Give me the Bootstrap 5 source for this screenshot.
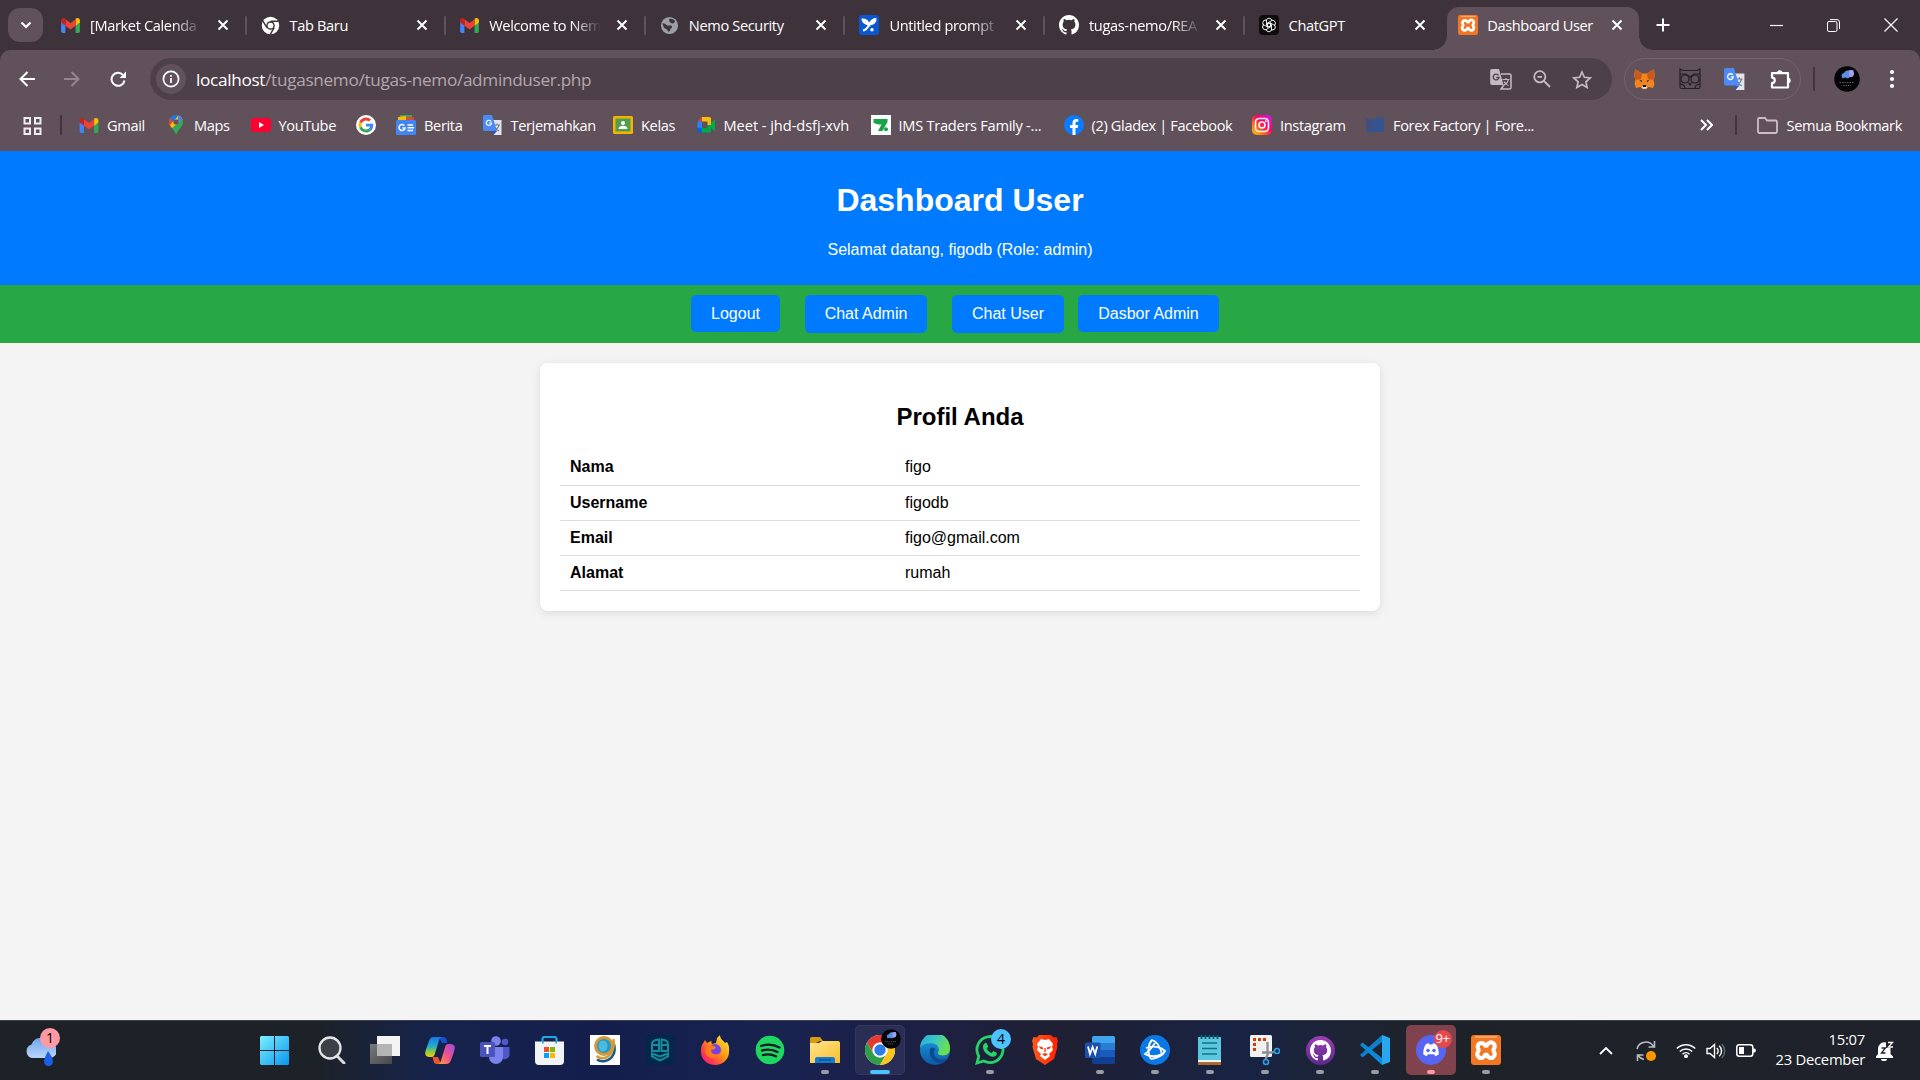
<!DOCTYPE html>
<html lang="id">
<head>
<meta charset="utf-8">
<title>Dashboard User</title>
<link href="https://cdn.jsdelivr.net/npm/bootstrap@5.3.0/dist/css/bootstrap.min.css" rel="stylesheet">
<style>
html,body{height:100%}
body{width:1920px;height:1080px;overflow:hidden;background:#f4f4f4;font-family:"Liberation Sans",Arial,sans-serif;color:#000;line-height:normal}
svg{display:block;flex:none}
.chrome-ui,.taskbar{font-family:"Open Sans","Noto Sans",sans-serif;color:#fff}
.tabstrip{height:50px;background:#3e333a}
.tabs-menu{width:35px;height:34px;margin:8px 3px 0 8px;border-radius:12px;background:#61515b}
.tab-item{width:199.6px;height:50px;padding:0 17px 0 15px;position:relative}
.tab-item+.tab-item:not(.is-active)::before{content:"";position:absolute;left:-1px;top:16px;width:2px;height:19px;background:#61515b;border-radius:1px}
.tab-label{width:112px;margin-left:10px;font-size:14.6px;letter-spacing:-.36px;white-space:nowrap;line-height:20px}
.tab-label.fades{-webkit-mask-image:linear-gradient(90deg,#000 75%,transparent);mask-image:linear-gradient(90deg,#000 75%,transparent)}
.tab-item.is-active{width:192px;margin:7px 0 0 4px;height:43px;padding:0 0 7px 11px;background:#61515b;border-radius:12px 12px 0 0}
.tab-item.is-active .tab-label{margin-left:9px}
.tab-item.is-active::before,.tab-item.is-active::after{content:"";position:absolute;bottom:0;width:14px;height:14px}
.tab-item.is-active::before{left:-14px;background:radial-gradient(circle at 0 0,transparent 13.5px,#61515b 14px)}
.tab-item.is-active::after{right:-14px;background:radial-gradient(circle at 100% 0,transparent 13.5px,#61515b 14px)}
.new-tab{padding-left:17px}
.win-btn{width:57px}
.win-group{margin-right:1px}
.toolwrap{background:#3e333a}
.toolbar{height:58px;background:#61515b;border-radius:10px 10px 0 0}
.nav-ico{width:45px}
.omnibox{width:1462px;height:42px;border-radius:21px;background:#4d4049;padding:0 20px 0 6px;margin-left:3px}
.info-dot{width:30px;height:30px;border-radius:50%;background:#61515b}
.url-text{font-size:17.2px;letter-spacing:-.32px;color:#b3a8ae;margin-left:10px}
.url-text b{font-weight:400;color:#fff}
.ext-pill{width:177px;height:42px;border-radius:21px;border:1px solid #75656f;margin-left:12px;padding:0 9px 0 5px}
.v-sep{width:2px;height:24px;background:#42363d;border-radius:1px}
.bookmarks{height:43px;padding:0 0 9px 23px;background:#61515b;font-size:14.6px;letter-spacing:-.36px;line-height:20px}
.bookmarks>svg:first-child{margin-top:2px}
.bm{white-space:nowrap;flex:none}
.bm span{margin-left:8px}
.bm:nth-child(3){width:87px}.bm:nth-child(4){width:84.5px}.bm:nth-child(5){width:105.5px}.bm:nth-child(6){width:40px}
.bm:nth-child(7){width:86.500px}.bm:nth-child(8){width:130.500px}.bm:nth-child(9){width:82.500px}.bm:nth-child(10){width:175px}
.bm:nth-child(11){width:193px}.bm:nth-child(12){width:188.500px}.bm:nth-child(13){width:113px}.bm:nth-child(14){width:170px}
.bm:nth-child(10){letter-spacing:-.04px}.bm:nth-child(11){letter-spacing:-.26px}
.page-head{height:134px;padding:10px;background:#007bff;color:#fff}
.page-head h1{font-size:32px;font-weight:700;line-height:37px;margin:21.4px 0}
.page-head p{font-size:16px;line-height:18px;margin:0}
.page-nav{height:58px;padding-top:10px;background:#28a745;padding-right:10px}
.page-nav .btn{font-size:16px;line-height:18px;padding:10px 0 9px;border:0;border-radius:5px;background:#007bff;color:#fff;height:37px}
.page-nav .btn.tall{height:38px}
.profile{width:840px;height:248px;margin:20px auto 0;padding:20px;border:0;border-radius:8px;background:#fff;box-shadow:0 2px 10px rgba(0,0,0,.1)}
.profile h2{font-size:24px;font-weight:700;line-height:27px;margin:20px 0;color:#000}
.profile table{margin:0;--bs-table-bg:transparent;--bs-table-color:#000;color:#000}
.profile th,.profile td{padding:8px 10px;line-height:18px;border-bottom:1px solid #ddd;height:35px;font-size:16px}
.profile th{width:335px}
.taskbar{height:60px;border-top:1px solid #39424a;background:linear-gradient(90deg,#1d2228 0,#1d2229 320px,#16234b 430px,#141e4d 600px,#182350 780px,#1c2048 880px,#1f2033 1060px,#182344 1240px,#1d2437 1330px,#1d2229 1420px,#1f222a 100%)}
.weather{width:247px;padding:2px 0 0 25px}
.task{width:55.05px;height:59px;flex:none}
.task-face{width:50px;height:50px;margin-top:4px;border-radius:5px;position:relative}
.task-face.open::after{content:"";position:absolute;left:21px;bottom:1px;width:8px;height:4px;border-radius:2px;background:#9a9ca5}
.task-face.current{background:#2a2e56;border:1px solid #34385f}
.task-face.current::after{left:14px;bottom:0;width:20px;background:#4cc2ff}
.task-face.alerting{background:#80434d}
.task-face.alerting::after{background:#ff99a4}
.pip{position:absolute;right:4px;top:4px;width:20px;height:20px;border-radius:50%;background:#4cc2ff;color:#000;font-size:14px;line-height:20px;text-align:center}
.pip-red{background:#e5484d;color:#fff;width:18px;height:18px;line-height:17px;font-size:13px;letter-spacing:-.5px;right:4px;top:5px}
.pip-pink{background:#ff99a4;right:-4px;top:-3px}
.clock{font-size:14.8px;letter-spacing:-.25px;line-height:20px;width:102px;margin:-3px 0 0 7px}
</style>
<script src="https://cdn.jsdelivr.net/npm/bootstrap@5.3.0/dist/js/bootstrap.bundle.min.js"></script>
</head>
<body class="d-flex flex-column">
<svg width="0" height="0" class="position-absolute">
<defs>
<linearGradient id="gWin" x1="0" y1="0" x2="1" y2="1"><stop offset="0" stop-color="#7af0ff"/><stop offset="1" stop-color="#0a95f0"/></linearGradient>
<linearGradient id="gInsta" x1="0" y1="1" x2="1" y2="0"><stop offset="0" stop-color="#ffd600"/><stop offset=".35" stop-color="#ff5a1f"/><stop offset=".6" stop-color="#ff0069"/><stop offset="1" stop-color="#c81fff"/></linearGradient>
<linearGradient id="gCloud" x1="0" y1="0" x2="0" y2="1"><stop offset="0" stop-color="#6fa4ef"/><stop offset="1" stop-color="#b9d6fb"/></linearGradient>
<linearGradient id="gFire" x1="1" y1="0" x2="0" y2="1"><stop offset="0" stop-color="#fff44f"/><stop offset=".45" stop-color="#ff980e"/><stop offset=".75" stop-color="#ff3750"/><stop offset="1" stop-color="#e31587"/></linearGradient>
<linearGradient id="gFold" x1="0" y1="0" x2="1" y2="1"><stop offset="0" stop-color="#ffe58a"/><stop offset="1" stop-color="#f9bd2e"/></linearGradient>
<linearGradient id="gEdge" x1="0" y1="0" x2="1" y2=".4"><stop offset="0" stop-color="#2aa7e0"/><stop offset=".5" stop-color="#36c6c8"/><stop offset="1" stop-color="#6be04e"/></linearGradient>
<linearGradient id="gEdge2" x1="0" y1="0" x2="0" y2="1"><stop offset="0" stop-color="#1b9de2"/><stop offset="1" stop-color="#0c59a4"/></linearGradient>
<linearGradient id="gCoA" x1="0" y1="0" x2="0" y2="1"><stop offset="0" stop-color="#1877e8"/><stop offset=".45" stop-color="#22a9d0"/><stop offset=".75" stop-color="#8fcf3a"/><stop offset="1" stop-color="#ffc400"/></linearGradient>
<linearGradient id="gCoB" x1="1" y1="0" x2="0" y2="1"><stop offset="0" stop-color="#9a4bea"/><stop offset=".5" stop-color="#f0508d"/><stop offset="1" stop-color="#ff9d3c"/></linearGradient>
<linearGradient id="gBrave" x1="0" y1="0" x2="1" y2="0"><stop offset="0" stop-color="#ff5a1f"/><stop offset="1" stop-color="#ff2000"/></linearGradient>
<linearGradient id="gGh" x1="0" y1="0" x2="0" y2="1"><stop offset="0" stop-color="#9b3fb5"/><stop offset="1" stop-color="#5a2a8a"/></linearGradient>
<linearGradient id="gStack" x1="0" y1="0" x2="1" y2="1"><stop offset="0" stop-color="#77797b"/><stop offset="1" stop-color="#46484a"/></linearGradient>
</defs>
<symbol id="i-gmail" viewBox="0 0 20 16"><path fill="#4285f4" d="M0 3v11.500A1.500 1.500 0 0 0 1.500 16H4.600V6.500z"/><path fill="#34a853" d="M15.400 16h3.100A1.500 1.500 0 0 0 20 14.500V3l-4.600 3.500z"/><path fill="#fbbc04" d="M15.400 1.500v6.700L20 4.700V2.600C20 .3 17.400-.8 15.600.6z"/><path fill="#ea4335" d="M4.600 8.200V1.300L10 5.400l5.400-4.100v6.900L10 12.300z"/><path fill="#c5221f" d="M0 2.600v2.100l4.600 3.500V1.300L4.200.6C2.600-.8 0 .3 0 2.600z"/></symbol>
<symbol id="i-x" viewBox="0 0 12 12"><path d="M1.500 1.500l9 9m0-9l-9 9" stroke="#fff" stroke-width="1.900"/></symbol>
<symbol id="i-chromew" viewBox="0 0 20 20"><circle cx="10" cy="10" r="9.200" fill="#fff"/><circle cx="10" cy="10" r="4.500" fill="#3e333a"/><circle cx="10" cy="10" r="3" fill="#fff"/><path d="M10 5.500h8.500M6.100 12.300L1.900 5M13.900 12.300L9.600 19.600" stroke="#3e333a" stroke-width="1.500"/></symbol>
<symbol id="i-globe" viewBox="0 0 20 20"><circle cx="10" cy="10" r="9" fill="#9aa0a6"/><path d="M2.500 7.500c3 0 3.500 1 5 2.500h4.500c1.500 1.500.5 3-1 3.500 0 2-1 3-2.500 3-.5-3-3.500-3-4.500-4.500zM9.500 3c1 1.500-.5 2.500 1 3.500s2.500 2 4.500.5c1-.8 1-2-.5-3s-3-1.500-5-1z" fill="#3e333a"/></symbol>
<symbol id="i-prompt" viewBox="0 0 20 20"><rect width="20" height="20" rx="3" fill="#0b57d0"/><path d="M4 15.500C7 15 9 12 10 10c1.500-3.500 3-6 6.500-6 .5 3-2 5-5 5.500M10 10C8 9 4 8 3.500 4.500 7 4 9 6.500 10 10z" stroke="#fff" stroke-width="1.900" fill="#fff"/><circle cx="13" cy="14.800" r="1.700" fill="#fff"/></symbol>
<symbol id="i-github" viewBox="0 0 16 16"><path d="M8 0C3.580 0 0 3.580 0 8c0 3.540 2.290 6.530 5.470 7.590.4.070.55-.17.55-.38 0-.19-.01-.82-.01-1.490-2.010.37-2.530-.49-2.690-.94-.09-.23-.48-.94-.82-1.130-.28-.15-.68-.52-.01-.53.630-.01 1.080.58 1.230.82.720 1.210 1.870.87 2.330.66.070-.52.280-.87.510-1.070-1.780-.2-3.640-.89-3.640-3.950 0-.87.310-1.590.82-2.150-.08-.2-.36-1.020.080-2.120 0 0 .67-.21 2.200.82a7.600 7.600 0 0 1 4 0c1.530-1.040 2.200-.82 2.200-.82.440 1.100.160 1.920.080 2.120.51.560.82 1.270.82 2.150 0 3.070-1.870 3.750-3.650 3.950.290.250.540.730.540 1.480 0 1.070-.01 1.930-.01 2.200 0 .21.150.46.550.38A8.010 8.010 0 0 0 16 8c0-4.420-3.580-8-8-8z"/></symbol>
<symbol id="i-gpt" viewBox="0 0 20 20"><rect width="20" height="20" rx="4" fill="#0d0d0d"/><g fill="none" stroke="#fff" stroke-width=".9"><path id="petal" d="M10 3.200a3.200 3.200 0 0 1 3 2.200l-4.500 2.600v4.300M7.200 5.500A3.200 3.200 0 0 1 10 3.200"/><use href="#petal" transform="rotate(60 10 10)"/><use href="#petal" transform="rotate(120 10 10)"/><use href="#petal" transform="rotate(180 10 10)"/><use href="#petal" transform="rotate(240 10 10)"/><use href="#petal" transform="rotate(300 10 10)"/></g></symbol>
<symbol id="i-xampp" viewBox="0 0 30 30"><rect width="30" height="30" rx="3" fill="#f37623"/><path d="M4 2h22" stroke="#ffb27a" stroke-width="1.500"/><path d="M10.500 8a3.900 3.900 0 0 0-3.200 6c.5.800.5 1.600 0 2.400a3.900 3.900 0 1 0 6.500 4c.5-1 1.900-1 2.400 0a3.900 3.900 0 1 0 6.500-4c-.5-.8-.5-1.600 0-2.400a3.900 3.900 0 1 0-6.500-4c-.5 1-1.900 1-2.400 0A3.900 3.900 0 0 0 10.500 8z" fill="none" stroke="#fff" stroke-width="4.200"/></symbol>
<symbol id="i-g" viewBox="0 0 48 48"><circle cx="24" cy="24" r="24" fill="#fff"/><g transform="translate(6 6) scale(.75)"><path fill="#ea4335" d="M24 9.500c3.540 0 6.710 1.220 9.210 3.600l6.850-6.850C35.900 2.380 30.470 0 24 0 14.620 0 6.510 5.380 2.560 13.220l7.980 6.190C12.430 13.720 17.740 9.500 24 9.500z"/><path fill="#4285f4" d="M46.980 24.550c0-1.570-.15-3.090-.38-4.550H24v9.020h12.940c-.58 2.960-2.260 5.480-4.780 7.180l7.730 6c4.510-4.180 7.090-10.360 7.090-17.650z"/><path fill="#fbbc05" d="M10.530 28.590a14.500 14.500 0 0 1 0-9.180l-7.980-6.190a24 24 0 0 0 0 21.560z"/><path fill="#34a853" d="M24 48c6.480 0 11.930-2.130 15.890-5.810l-7.730-6c-2.150 1.450-4.920 2.300-8.160 2.300-6.260 0-11.570-4.220-13.470-9.910l-7.980 6.190C6.510 42.620 14.620 48 24 48z"/></g></symbol>
<symbol id="i-trans" viewBox="0 0 20 20"><path d="M9 5h9.500v15H11z" fill="#e4e4e8"/><path d="M11 10h6m-3-1.500V10m2 0c-.5 2.500-2 4-4 5m0-3c1 2 2.500 3.500 4 4" stroke="#6b7f88" fill="none" stroke-width="1.100"/><path d="M1.500 0H9l5 16H1.500A1.500 1.500 0 0 1 0 14.500v-13A1.500 1.500 0 0 1 1.500 0z" fill="#4c8bf5"/><path d="M9.500 16H14l-3.500 4z" fill="#2a56c6"/><path d="M8 6.300A2.600 2.600 0 1 0 8.500 8H6.200" stroke="#fff" stroke-width="1.200" fill="none"/></symbol>
<symbol id="i-avatar" viewBox="0 0 26 26"><circle cx="13" cy="13" r="12.800" fill="#050507"/><path d="M7.500 9.500c0-2 2-2 3-3 1-2 3-2 4.500-2.200L19 4l1 3.500-1 3-3 .5-2 1.500-3-1-2.500 1z" fill="#5a8fe8"/><path d="M15 4.500l4-.5 1 3.500-1 3-3.500.5z" fill="#a8a0e8"/><path d="M5.500 16.500h15M9 19.500h8" stroke="#5d6166" stroke-width="1.200" stroke-dasharray="1.500 1"/></symbol>
</svg>

<div class="chrome-ui flex-shrink-0">
  <div class="tabstrip d-flex">
    <div class="tabs-menu d-flex align-items-center justify-content-center"><svg width="12" height="8" viewBox="0 0 12 8"><path d="M1.500 1.500L6 6l4.500-4.500" fill="none" stroke="#fff" stroke-width="2.200"/></svg></div>
    <div class="tab-item d-flex align-items-center"><svg width="19" height="15"><use href="#i-gmail"/></svg><div class="tab-label fades">[Market Calenda</div><svg class="ms-auto" width="12" height="12"><use href="#i-x"/></svg></div>
    <div class="tab-item d-flex align-items-center"><svg width="19" height="19"><use href="#i-chromew"/></svg><div class="tab-label">Tab Baru</div><svg class="ms-auto" width="12" height="12"><use href="#i-x"/></svg></div>
    <div class="tab-item d-flex align-items-center"><svg width="19" height="15"><use href="#i-gmail"/></svg><div class="tab-label fades">Welcome to Nem</div><svg class="ms-auto" width="12" height="12"><use href="#i-x"/></svg></div>
    <div class="tab-item d-flex align-items-center"><svg width="19" height="19"><use href="#i-globe"/></svg><div class="tab-label">Nemo Security</div><svg class="ms-auto" width="12" height="12"><use href="#i-x"/></svg></div>
    <div class="tab-item d-flex align-items-center"><svg width="20" height="20"><use href="#i-prompt"/></svg><div class="tab-label fades">Untitled prompt</div><svg class="ms-auto" width="12" height="12"><use href="#i-x"/></svg></div>
    <div class="tab-item d-flex align-items-center"><svg width="20" height="20" fill="#fff"><use href="#i-github"/></svg><div class="tab-label fades">tugas-nemo/REA</div><svg class="ms-auto" width="12" height="12"><use href="#i-x"/></svg></div>
    <div class="tab-item d-flex align-items-center"><svg width="20" height="20"><use href="#i-gpt"/></svg><div class="tab-label">ChatGPT</div><svg class="ms-auto" width="12" height="12"><use href="#i-x"/></svg></div>
    <div class="tab-item is-active d-flex align-items-center"><svg width="20" height="20"><use href="#i-xampp"/></svg><div class="tab-label">Dashboard User</div><svg class="ms-auto me-3" width="12" height="12"><use href="#i-x"/></svg></div>
    <div class="new-tab d-flex align-items-center"><svg width="14" height="14"><path d="M7 .5v13M.5 7h13" stroke="#fff" stroke-width="2"/></svg></div>
    <div class="win-group ms-auto d-flex align-items-center">
      <div class="win-btn d-flex justify-content-center"><svg width="13" height="13"><path d="M0 6.500h13" stroke="#fff" stroke-width="1.200"/></svg></div>
      <div class="win-btn d-flex justify-content-center"><svg width="13" height="13" fill="none" stroke="#fff"><rect x=".5" y="2.500" width="9.500" height="10" rx="1.500"/><path d="M3 .6h7a2.500 2.500 0 0 1 2.500 2.500V10"/></svg></div>
      <div class="win-btn d-flex justify-content-center"><svg width="14" height="14"><path d="M.5.5l13 13m0-13l-13 13" stroke="#fff" stroke-width="1.200"/></svg></div>
    </div>
  </div>
  <div class="toolwrap">
  <div class="toolbar d-flex align-items-center">
    <div class="d-flex ps-1 me-2 ms-0">
      <div class="nav-ico d-flex justify-content-center"><svg width="16" height="16" fill="none" stroke="#fff" stroke-width="2"><path d="M16 8H2M8.500 1L1.500 8l7 7"/></svg></div>
      <div class="nav-ico d-flex justify-content-center"><svg width="16" height="16" fill="none" stroke="#94868f" stroke-width="2"><path d="M0 8h14M7.500 1l7 7-7 7"/></svg></div>
      <div class="nav-ico d-flex justify-content-center ps-1"><svg width="17" height="17" fill="none" stroke="#fff" stroke-width="2"><path d="M14.500 9.500A6.500 6.500 0 1 1 13 4l2 2"/><path d="M16 .5V7H9.500l2.200-2H14V2.500z" fill="#fff" stroke="none"/></svg></div>
    </div>
    <div class="omnibox d-flex align-items-center">
      <div class="info-dot d-flex align-items-center justify-content-center"><svg width="18" height="18"><circle cx="9" cy="9" r="7.600" fill="none" stroke="#fff" stroke-width="1.700"/><path d="M9 8v5M9 5v1.800" stroke="#fff" stroke-width="1.700"/></svg></div>
      <div class="url-text"><b>localhost</b>/tugasnemo/tugas-nemo/adminduser.php</div>
      <svg class="ms-auto" width="22" height="21" viewBox="0 0 22 21"><path d="M11 5h8.500A1.500 1.500 0 0 1 21 6.500v12a1.500 1.500 0 0 1-1.500 1.500H11l3-4" fill="none" stroke="#c4bbc0" stroke-width="1.500"/><path d="M12.500 10.500h7m-3.500-1.500v1.500m2.500 0c-.5 2.500-2.500 4.500-4.500 5.500m0-3.500c1 2 3 3.500 4.500 4" fill="none" stroke="#c4bbc0" stroke-width="1.200"/><path d="M2 0h7l4.500 16H2a1.800 1.800 0 0 1-1.800-1.800V1.800A1.800 1.800 0 0 1 2 0z" fill="#c4bbc0"/><path d="M8.500 6.300A2.900 2.900 0 1 0 9 8.500H6.300" fill="none" stroke="#4d4049" stroke-width="1.400"/></svg>
      <svg style="margin-left:21px" width="18" height="18" viewBox="0 0 18 18" fill="none" stroke="#c4bbc0" stroke-width="1.800"><circle cx="6.800" cy="6.800" r="5.600"/><path d="M11 11l6 6M4.500 6.800h4.600"/></svg>
      <svg style="margin-left:21px" width="20" height="19" viewBox="0 0 20 19"><path d="M10 2l2.400 5.300 5.800.6-4.300 3.900 1.200 5.700L10 14.600l-5.100 2.900 1.200-5.700L1.800 7.900l5.800-.6z" fill="none" stroke="#c4bbc0" stroke-width="1.700"/></svg>
    </div>
    <div class="ext-pill d-flex align-items-center justify-content-between">
      <svg class="ms-1" width="21" height="20" viewBox="0 0 21 20"><path d="M1 0l7 4.500h5L20 0l.7 7-1.200 4 1 4-1.500 4-4.500-1-2 2h-4l-2-2-4.500 1L.5 15l1-4L.3 7z" fill="#f5841f"/><path d="M1 0l7 5-1 5-6 1zM20 0l-7 5 1 5 6 1z" fill="#c95a1c"/><path d="M5 10.500l3 1v2zM16 10.500l-3 1v2z" fill="#233447"/><path d="M8 18.500l.5-2.500h4l.5 2.500-1 1.300H9z" fill="#e8dcd4"/><path d="M8.500 16h4l-.5 2h-3z" fill="#161616"/></svg>
      <svg width="22" height="22" viewBox="0 0 22 22" fill="none" stroke="#241f24" stroke-width="1.200"><path d="M1 7V1l3 1.500h14L21 1v18a1.500 1.500 0 0 1-1.500 1.500h-17A1.500 1.500 0 0 1 1 19zM1 6h6l4 3 4-3h6"/><circle cx="6" cy="11" r="4"/><circle cx="16" cy="11" r="4"/><path d="M9.500 14.500L11 17l1.500-2.500M1 16c3 0 4.500 1 5 4m15-4c-3 0-4.500 1-5 4"/></svg>
      <svg width="22" height="22"><use href="#i-trans"/></svg>
      <svg width="21" height="21" viewBox="0 0 21 21"><path d="M2 4.200h16V9v9.500H2v-4.300a2.800 2.800 0 0 0 0-5.600z" fill="none" stroke="#fff" stroke-width="2.200" stroke-linejoin="round"/><path d="M7 4a2.700 2.700 0 0 1 5.400 0zM18 8.700a2.700 2.700 0 0 1 0 5.400z" fill="#fff"/></svg>
    </div>
    <div class="v-sep" style="margin-left:12px"></div>
    <svg style="margin-left:19px" width="26" height="26"><use href="#i-avatar"/></svg>
    <svg style="margin-left:29px" width="6" height="22" fill="#fff"><circle cx="3" cy="4" r="2.100"/><circle cx="3" cy="11" r="2.100"/><circle cx="3" cy="18" r="2.100"/></svg>
  </div>
  </div>
  <div class="bookmarks d-flex align-items-center">
    <svg width="19" height="18" viewBox="0 0 19 18" fill="none" stroke="#eee" stroke-width="2"><path d="M1.500 1h5.500v5.500H1.500zM12 1h5.500v5.500H12zM1.500 11.500h5.500V17H1.500zM12 11.500h5.500V17H12z"/></svg>
    <div class="v-sep" style="margin:0 17px 0 18px;height:20px"></div>
    <div class="bm d-flex align-items-center"><svg width="20" height="15"><use href="#i-gmail"/></svg><span>Gmail</span></div>
    <div class="bm d-flex align-items-center"><svg width="20" height="20" viewBox="0 0 20 20"><path d="M3 7a7 7 0 0 1 14 0c0 5-5 7-7 13C8.500 14 3 12 3 7z" fill="#34a853"/><path d="M4.500 2.700A7 7 0 0 1 10 0v7L5 12.500C3.500 10.500 2.500 8 3 6z" fill="#ea4335"/><path d="M4.500 2.700C7-.5 11-.3 12.500.5L7 7.500z" fill="#1a73e8"/><path d="M12.300.4A7 7 0 0 1 16.500 4.500L6 13c-.8-1-1.500-2-2-3z" fill="#fbbc04"/><path d="M12.300.4A7 7 0 0 1 16.500 4.500L11 9z" fill="#4285f4"/><circle cx="10" cy="7" r="2.600" fill="#61515b"/></svg><span>Maps</span></div>
    <div class="bm d-flex align-items-center"><svg width="20" height="20" viewBox="0 0 20 20"><rect y="3" width="20" height="14" rx="3" fill="#ff0033"/><path d="M8 7l5 3-5 3z" fill="#fff"/></svg><span>YouTube</span></div>
    <div class="bm d-flex align-items-center"><svg width="20" height="20"><use href="#i-g"/></svg></div>
    <div class="bm d-flex align-items-center"><svg width="20" height="20" viewBox="0 0 20 20"><path d="M4 0h12v6H4z" fill="#34a853"/><path d="M2 2l8-1v5H2z" fill="#fbbc04"/><path d="M10 2.500l8-.5v4h-8z" fill="#ea4335"/><rect y="5" width="20" height="15" rx="1.500" fill="#4285f4"/><path d="M8.300 10.500A3 3 0 1 0 9 13H6.500M11.500 10H17M11.500 12.700H18M11.500 15.400H17" stroke="#fff" stroke-width="1.500" fill="none"/></svg><span>Berita</span></div>
    <div class="bm d-flex align-items-center"><svg width="20" height="20"><use href="#i-trans"/></svg><span>Terjemahkan</span></div>
    <div class="bm d-flex align-items-center"><svg width="20" height="20" viewBox="0 0 20 20"><rect y="1" width="20" height="18" rx="1.500" fill="#f4b400"/><rect x="2.500" y="3.500" width="15" height="13" fill="#4f9f4f"/><circle cx="10" cy="8" r="2" fill="#fff"/><path d="M5.500 14c0-2.500 2.500-3.300 4.500-3.300s4.500.8 4.500 3.300z" fill="#fff"/></svg><span>Kelas</span></div>
    <div class="bm d-flex align-items-center"><svg width="20" height="20" viewBox="0 0 20 20"><path d="M6 2h7.500A1.500 1.500 0 0 1 15 3.500V10h-3.500V6.500H6z" fill="#fbbc04"/><path d="M6 2v4.500H1.500z" fill="#ea4335"/><path d="M1.500 6.500H6V13H1.500z" fill="#2684fc"/><path d="M1.500 13H6v4.500H3A1.500 1.500 0 0 1 1.500 16z" fill="#0066da"/><path d="M6 13.300h5.500V10H15v6a1.500 1.500 0 0 1-1.500 1.500H6zM15 8l3-3c.5-.5 1-.2 1 .4V15c0 .6-.5.800-1 .4l-3-3z" fill="#00ac47"/></svg><span>Meet - jhd-dsfj-xvh</span></div>
    <div class="bm d-flex align-items-center"><svg width="20" height="20" viewBox="0 0 20 20"><rect width="20" height="20" fill="#fff"/><path d="M2.500 4h14v3l-5 9H7l3.500-6.500h-3l-5-1.500z" fill="#16a34a"/><circle cx="15" cy="14.300" r="2" fill="#16a34a"/></svg><span>IMS Traders Family -...</span></div>
    <div class="bm d-flex align-items-center"><svg width="20" height="20" viewBox="0 0 20 20"><circle cx="10" cy="10" r="10" fill="#0a7cff"/><path d="M8.500 20v-7H6v-3h2.500V8c0-2.600 1.500-4 3.800-4l2 .2v2.500h-1.200c-1.200 0-1.600.7-1.600 1.500V10h2.700l-.5 3h-2.200v7z" fill="#fff"/></svg><span>(2) Gladex | Facebook</span></div>
    <div class="bm d-flex align-items-center"><svg width="20" height="20" viewBox="0 0 20 20"><rect width="20" height="20" rx="5" fill="url(#gInsta)"/><rect x="3.500" y="3.500" width="13" height="13" rx="3.800" fill="none" stroke="#fff" stroke-width="1.600"/><circle cx="10" cy="10" r="3" fill="none" stroke="#fff" stroke-width="1.600"/><circle cx="13.800" cy="6.200" r="1" fill="#fff"/></svg><span>Instagram</span></div>
    <div class="bm d-flex align-items-center"><svg width="20" height="20" viewBox="0 0 20 20"><path d="M1 3h3l1 2 3-2 1 2 4-3v2l3-2v2l3-3v16H1z" fill="#34538f"/><path d="M8 6H5l-1 4h3l-1 5M2 5v10" stroke="#54486a" fill="none"/></svg><span>Forex Factory | Fore...</span></div>
    <svg class="ms-auto" width="13" height="12" fill="none" stroke="#fff" stroke-width="2"><path d="M1 1l5 5-5 5M7 1l5 5-5 5"/></svg>
    <div class="v-sep" style="margin-left:22px;margin-right:20px;height:20px"></div>
    <svg width="21" height="17" viewBox="0 0 21 17"><path d="M1 2.500A1.300 1.300 0 0 1 2.300 1H8l2 2.500h8.500A1.500 1.500 0 0 1 20 5v9.500a1.500 1.500 0 0 1-1.500 1.500h-16A1.500 1.500 0 0 1 1 14.500z" fill="none" stroke="#c9c0c5" stroke-width="1.800"/></svg>
    <span style="margin:0 18px 0 9px">Semua Bookmark</span>
  </div>
</div>

<main class="flex-grow-1">
  <header class="page-head text-center"><h1>Dashboard User</h1><p>Selamat datang, figodb (Role: admin)</p></header>
  <nav class="page-nav d-flex justify-content-center align-items-start">
    <a class="btn" style="width:89px;margin-right:25px">Logout</a>
    <a class="btn tall" style="width:122px;margin-right:25px">Chat Admin</a>
    <a class="btn tall" style="width:112px;margin-right:14px">Chat User</a>
    <a class="btn" style="width:141px">Dasbor Admin</a>
  </nav>
  <section class="card profile">
    <h2 class="text-center">Profil Anda</h2>
    <table class="table">
      <tr><th>Nama</th><td>figo</td></tr>
      <tr><th>Username</th><td>figodb</td></tr>
      <tr><th>Email</th><td>figo@gmail.com</td></tr>
      <tr><th>Alamat</th><td>rumah</td></tr>
    </table>
  </section>
</main>

<footer class="taskbar d-flex align-items-center flex-shrink-0">
  <div class="weather"><div class="position-relative d-inline-block"><svg width="31" height="36" viewBox="0 0 31 36"><path d="M7 27a7 7 0 0 1-.5-13.500A9.500 9.500 0 0 1 24 12a7.500 7.500 0 0 1 1 15z" fill="url(#gCloud)"/><path d="M23 20c3 4 5 7.500 5 10.500a4.500 4.500 0 0 1-9 0C19 27.500 21 24 23 20z" fill="#1d5fe8"/></svg><span class="pip pip-pink">1</span></div></div>
  <div class="task d-flex justify-content-center"><div class="task-face d-flex align-items-center justify-content-center"><svg width="29" height="29" fill="url(#gWin)"><path d="M1 0h13v14H0V1zM15 0h13l1 1v13H15zM0 15h14v14H1l-1-1zM15 15h14v13l-1 1H15z"/></svg></div></div>
  <div class="task d-flex justify-content-center"><div class="task-face d-flex align-items-center justify-content-center ps-1"><svg width="28" height="28" viewBox="0 0 28 28"><path d="M19 20l7 7" stroke="#d5d8dc" stroke-width="3" stroke-linecap="round"/><circle cx="12" cy="12" r="10.500" fill="#3b4049" stroke="#e4e6e8" stroke-width="2.300"/></svg></div></div>
  <div class="task d-flex justify-content-center"><div class="task-face d-flex align-items-center justify-content-center"><svg width="30" height="28"><path d="M0 8h22v20H0z" fill="url(#gStack)"/><path d="M7 0h23v20H7z" fill="#f4f4f4"/><path d="M7 8h15v12H7z" fill="#b4b4b4"/></svg></div></div>
  <div class="task d-flex justify-content-center"><div class="task-face d-flex align-items-center justify-content-center"><svg width="30" height="27" viewBox="0 0 30 27"><path d="M14 0h4c3 0 3.500 2 4.300 6H17z" fill="#1b4fd0"/><path d="M9 0h8c-2 .5-2.500 2-3.200 4L9.500 18c-.6 1.800-2 2-4 2C0 20-.5 17 .800 13L4 4c.8-2.500 2-4 5-4z" fill="url(#gCoA)"/><path d="M16 27h-4c-3 0-3.500-2-4.300-7H13z" fill="#f0532d"/><path d="M21 27h-8c2-.5 2.500-2 3.200-4L20.500 9c.6-1.800 2-2 4-2C30 7 30.500 10 29.200 14L26 23c-.8 2.500-2 4-5 4z" fill="url(#gCoB)"/></svg></div></div>
  <div class="task d-flex justify-content-center"><div class="task-face d-flex align-items-center justify-content-center"><svg width="30" height="28" viewBox="0 0 30 28"><circle cx="25" cy="6" r="3.300" fill="#5059c9"/><path d="M22 11h7.500v8a4.500 4.500 0 0 1-7.500 3z" fill="#5059c9"/><circle cx="16" cy="5" r="4.800" fill="#7b83eb"/><path d="M9 11h14v10a7 7 0 0 1-14 0z" fill="#7b83eb"/><rect y="6" width="15" height="15" rx="1.500" fill="#4b53bc"/><path d="M4 10h7M7.500 10v8" stroke="#fff" stroke-width="2"/></svg></div></div>
  <div class="task d-flex justify-content-center"><div class="task-face d-flex align-items-center justify-content-center"><svg width="29" height="29" viewBox="0 0 29 29"><path d="M7.500 8V3a2 2 0 0 1 2-2h10a2 2 0 0 1 2 2v5" fill="none" stroke="#1aa9e8" stroke-width="2.200"/><path d="M0 5.500h7v2h1.500v-2h12v2H22v-2h7v19.500a4 4 0 0 1-4 4H4a4 4 0 0 1-4-4z" fill="#f2f3f4"/><path d="M9 11h5v5H9z" fill="#f25022"/><path d="M15 11h5v5h-5z" fill="#7fba00"/><path d="M9 17h5v5H9z" fill="#00a4ef"/><path d="M15 17h5v5h-5z" fill="#ffb900"/></svg></div></div>
  <div class="task d-flex justify-content-center"><div class="task-face d-flex align-items-center justify-content-center"><svg width="30" height="30" viewBox="0 0 30 30"><rect width="30" height="30" fill="#fff"/><ellipse cx="14" cy="11" rx="8.500" ry="8.500" fill="#2499c9" stroke="#d59a35" stroke-width="3"/><path d="M24 9c2 8-1 15-9 17-3 .5-6 0-8-1.500" fill="none" stroke="#145a8a" stroke-width="2.600"/><path d="M23.500 4c1 7 0 13-5 17-4 3-8 3-12 0" fill="none" stroke="#d59a35" stroke-width="2.400"/><ellipse cx="13" cy="11" rx="4.500" ry="5.500" fill="#4dbbe0"/></svg></div></div>
  <div class="task d-flex justify-content-center"><div class="task-face d-flex align-items-center justify-content-center"><svg width="30" height="30" viewBox="0 0 30 30" fill="none" stroke="#138d9c" stroke-width="2"><rect width="30" height="30" fill="#03264a" stroke="none"/><path d="M14 16H7V9q0-4 7-4.500zM14 10H7M16.500 4.500q6.500.5 6.500 4.500v7h-6.500zM16.500 10H23M7 18.500v3l8 4 8-4v-3l-8 3z"/></svg></div></div>
  <div class="task d-flex justify-content-center"><div class="task-face d-flex align-items-center justify-content-center"><svg width="30" height="30" viewBox="0 0 30 30"><path d="M5 5l2 3 4-2c1 0 0 2 1 3l4-1 1-5 3-3c0 4 3 5 5 8l2-1c2 3 2.500 6 2 10a14 13 0 0 1-28 0C.5 13 2 9 4 7z" fill="url(#gFire)"/><circle cx="15" cy="15" r="6" fill="#7542e5"/><path d="M7 11c4-2 6 0 9 1-1 3-3 2-5 3 0 4 5 6 9 3-2 6-13 7-15-1z" fill="#ff7a1e"/></svg></div></div>
  <div class="task d-flex justify-content-center"><div class="task-face d-flex align-items-center justify-content-center"><svg width="30" height="30" viewBox="0 0 30 30"><circle cx="15" cy="15" r="14.300" fill="#1ed760"/><path d="M6 11c6-2 13-1.500 18.500 1.500M7 15.500c5.500-1.500 11-1 15.500 1.500M8 20c4.500-1.200 9-.7 13 1.300" fill="none" stroke="#131a2a" stroke-width="2.300" stroke-linecap="round"/></svg></div></div>
  <div class="task d-flex justify-content-center"><div class="task-face open d-flex align-items-center justify-content-center"><svg width="30" height="27" viewBox="0 0 30 27"><path d="M0 2a2 2 0 0 1 2-2h8l3 4h-3L0 9z" fill="#d99b0e"/><path d="M0 6l9 0 3-2h16a2 2 0 0 1 2 2v20H0z" fill="url(#gFold)"/><path d="M5 26v-4a2 2 0 0 1 2-2h16a2 2 0 0 1 2 2v4z" fill="#1579cc"/><path d="M9 23h12" stroke="#0a4f94" stroke-width="1.300"/></svg></div></div>
  <div class="task d-flex justify-content-center"><div class="task-face current open d-flex align-items-center justify-content-center"><svg width="30" height="30" viewBox="0 0 30 30"><circle cx="15" cy="15" r="15" fill="#fff"/><path d="M15 7.500h13A15 15 0 0 0 2 7.500l6.500 11.300A7.500 7.500 0 0 1 15 7.500z" fill="#e33b2e"/><path d="M21.500 18.800A7.500 7.500 0 0 1 8.500 18.800L2 7.500A15 15 0 0 0 15 30z" fill="#2f9e4a"/><path d="M15 7.500h13A15 15 0 0 1 15 30l6.500-11.200A7.500 7.500 0 0 0 15 7.500z" fill="#fcc31e"/><circle cx="15" cy="15" r="7.300" fill="#fff"/><circle cx="15" cy="15" r="5.700" fill="#2a7de9"/></svg><svg class="position-absolute top-0 end-0" style="margin:3px 3px 0 0" width="20" height="20"><use href="#i-avatar"/></svg></div></div>
  <div class="task d-flex justify-content-center"><div class="task-face d-flex align-items-center justify-content-center"><svg width="30" height="30" viewBox="0 0 30 30"><circle cx="15" cy="15" r="15" fill="url(#gEdge2)"/><path d="M0 13A15 15 0 0 1 30 13c.5 5-3 7.500-7 7.500-3 0-5.500-1-5-3 2-3 .5-8-5-9C7 7.500 2 9.500 0 13z" fill="url(#gEdge)"/><path d="M10 14c-2 8 4 14 11 14 3 0 6-3 7-5-7 4-14 0-14-5 0-2 1-3 1.500-4-2-2-4.500-2-5.500 0z" fill="#0d4a92"/></svg></div></div>
  <div class="task d-flex justify-content-center"><div class="task-face open d-flex align-items-center justify-content-center"><svg width="30" height="30" viewBox="0 0 30 30"><path d="M2 28l1.800-6.800A13 13 0 1 1 8.800 26z" fill="none" stroke="#25d366" stroke-width="2.800"/><path d="M9.500 8.500c1-1 2-.8 2.500.2l1.200 2.700-1.400 2c1 2 2.500 3.500 4.700 4.500l1.900-1.800 3 1.500c1 .7.4 2.500-.8 3.300-3 2-7.500-.5-10-3s-3.800-7.500-1.100-9.400z" fill="#25d366"/></svg><span class="pip">4</span></div></div>
  <div class="task d-flex justify-content-center"><div class="task-face d-flex align-items-center justify-content-center"><svg width="26" height="30" viewBox="0 0 26 30"><path d="M7 0h12l2.500 2.500 3-.5L26 6l-1 3 .5 3-3.500 12-9 6-9-6L.5 12 1 9 0 6l1.500-4 3 .5z" fill="url(#gBrave)"/><path d="M9 4l4 1 4-1 4 5-1 3 1 3-4 4 1 2-5 4-5-4 1-2-4-4 1-3-1-3z" fill="#fff"/><path d="M7 11l4 1.500v2L8 13.500zM19 11l-4 1.500v2l3-1zM10 19l3-1 3 1-3 2.500zM12.300 13h1.400v4h-1.400z" fill="#ff3a12"/></svg></div></div>
  <div class="task d-flex justify-content-center"><div class="task-face open d-flex align-items-center justify-content-center"><svg width="30" height="28" viewBox="0 0 30 28"><path d="M7 1.500A1.500 1.500 0 0 1 8.500 0h20A1.500 1.500 0 0 1 30 1.500V7H7z" fill="#41a5ee"/><path d="M7 7h23v7H7z" fill="#2b7cd3"/><path d="M7 14h23v7H7z" fill="#185abd"/><path d="M7 21h23v5.500a1.500 1.500 0 0 1-1.500 1.500h-20A1.500 1.500 0 0 1 7 26.500z" fill="#103f91"/><rect y="6.500" width="15.500" height="15.500" rx="1.500" fill="#1a50b0"/><path d="M3 10.500l2 7.500 2.600-7 2.600 7 2-7.500" fill="none" stroke="#fff" stroke-width="1.800"/></svg></div></div>
  <div class="task d-flex justify-content-center"><div class="task-face open d-flex align-items-center justify-content-center"><svg width="30" height="30" viewBox="0 0 30 30"><circle cx="15" cy="15" r="15" fill="#0a78e6"/><g fill="none" stroke="#fff" stroke-width="1.800"><path d="M11 24C7 18 8 9 12 5c4 1 8 7 10 14"/><path d="M6 13c7-3 15-1 19 3-2 4-8 7-14 8"/><path d="M15 8C11 14 8 17 5 19c4 3 12 3 17 0"/></g></svg></div></div>
  <div class="task d-flex justify-content-center"><div class="task-face open d-flex align-items-center justify-content-center"><svg width="24" height="30" viewBox="0 0 24 30"><path d="M0 2h23v23H0z" fill="#5cc8de"/><path d="M0 25h23v2.500H0z" fill="#f3f3f3"/><path d="M0 27.500h23V30H0z" fill="#b5651d"/><path d="M4 8h15M4 13.500h15M4 19h15" stroke="#10718c" stroke-width="1.600"/><path d="M3.500 0v4M7.500 0v4M11.500 0v4M15.500 0v4M19.500 0v4" stroke="#0b6079" stroke-width="1.800"/></svg></div></div>
  <div class="task d-flex justify-content-center"><div class="task-face open d-flex align-items-center justify-content-center"><svg width="30" height="30" viewBox="0 0 30 30"><rect width="22" height="22" rx="1.500" fill="#f1f1f1"/><path d="M16 4.500H4.500V17" fill="none" stroke="#d83b01" stroke-width="3" stroke-dasharray="3 2"/><path d="M17.500 7v13l-2 4M12 17.500h10l3-1" fill="none" stroke="#8a9096" stroke-width="2.300"/><circle cx="27" cy="16" r="2.500" fill="none" stroke="#2b9fe8" stroke-width="1.700"/><circle cx="16" cy="27" r="2.500" fill="none" stroke="#2b9fe8" stroke-width="1.700"/></svg></div></div>
  <div class="task d-flex justify-content-center"><div class="task-face open d-flex align-items-center justify-content-center"><svg width="29" height="29" viewBox="0 0 29 29"><circle cx="14.500" cy="14.500" r="14.500" fill="url(#gGh)"/><svg x="4" y="4" width="21" height="21" fill="#fff"><use href="#i-github"/></svg></svg></div></div>
  <div class="task d-flex justify-content-center"><div class="task-face open d-flex align-items-center justify-content-center"><svg width="30" height="30" viewBox="0 0 30 30"><path d="M0 20l2.500 2.500L22 7V0z" fill="#0f7fc9"/><path d="M0 10l2.500-2.500L22 23v7z" fill="#0a8ad8"/><path d="M22 0l8 3v24l-8 3z" fill="#29a8f0"/></svg></div></div>
  <div class="task d-flex justify-content-center"><div class="task-face alerting open d-flex align-items-center justify-content-center"><svg width="30" height="30" viewBox="0 0 30 30"><circle cx="15" cy="15" r="15" fill="#5865f2"/><path d="M10 9l3-.8.6 1.300h2.800l.6-1.300 3 .8c2 3 3 6.500 2.700 10.500l-3.400 1.700-1.300-2h-6l-1.300 2-3.400-1.700C7 15.500 8 12 10 9z" fill="#fff"/><circle cx="12" cy="15.500" r="1.800" fill="#5865f2"/><circle cx="18" cy="15.500" r="1.800" fill="#5865f2"/></svg><span class="pip pip-red">9+</span></div></div>
  <div class="task d-flex justify-content-center"><div class="task-face open d-flex align-items-center justify-content-center"><svg width="30" height="30"><use href="#i-xampp"/></svg></div></div>
  <div class="ms-auto d-flex align-items-center">
    <svg width="14" height="9" fill="none" stroke="#fff" stroke-width="1.800"><path d="M1 8l6-6 6 6"/></svg>
    <svg style="margin-left:23px" width="20" height="20" viewBox="0 0 20 20" fill="none" stroke="#b9bcc0" stroke-width="1.600"><path d="M1 8a9 9 0 0 1 16.500-2.500M18.500 0v6h-6M8 18.500c-2.500-.5-4.500-2-6-4M1.500 20v-6h6"/><circle cx="15" cy="15" r="5" fill="#ff9800" stroke="none"/></svg>
    <svg style="margin-left:20px" width="20" height="15" viewBox="0 0 20 15" fill="none" stroke="#fff" stroke-width="1.500"><path d="M.8 5.500a13 13 0 0 1 18.400 0M3.800 8.500a9 9 0 0 1 12.400 0M6.500 11.200a5 5 0 0 1 7 0"/><circle cx="10" cy="13.200" r="1.200" fill="#fff"/></svg>
    <svg style="margin-left:10px" width="20" height="16" viewBox="0 0 20 16" fill="none" stroke="#fff" stroke-width="1.400"><path d="M1 5.500h3L8.500 1.500v13L4 10.500H1zM10.800 5a4 4 0 0 1 0 6M13.200 2.800a7 7 0 0 1 0 10.400"/><path d="M15.800 1a10 10 0 0 1 0 14" stroke="#666b72"/></svg>
    <svg style="margin-left:10px" width="20" height="13" viewBox="0 0 20 13"><rect x=".8" y=".8" width="16" height="11.400" rx="2.500" fill="none" stroke="#fff" stroke-width="1.500"/><path d="M3 3h5v7H3zM17 4.500h1.500q1.300 0 1.300 2t-1.300 2H17z" fill="#fff"/></svg>
    <div class="clock text-end"><div>15:07</div><div>23 December</div></div>
    <svg style="margin:0 26px 0 11px" width="18" height="20" viewBox="0 0 18 20"><path d="M2 8a6.500 6.500 0 0 1 8-6.500V7h4.500v6L17 15.500V17H0v-1.500L2 13zM5 18h6a3 2 0 0 1-6 0z" fill="#fff"/><path d="M12 1.500h4.500L12.500 6H17" fill="none" stroke="#fff" stroke-width="1.300"/><path d="M5.500 7h4l-4 5h4" fill="none" stroke="#1f222a" stroke-width="1.300"/></svg>
  </div>
</footer>
</body>
</html>
